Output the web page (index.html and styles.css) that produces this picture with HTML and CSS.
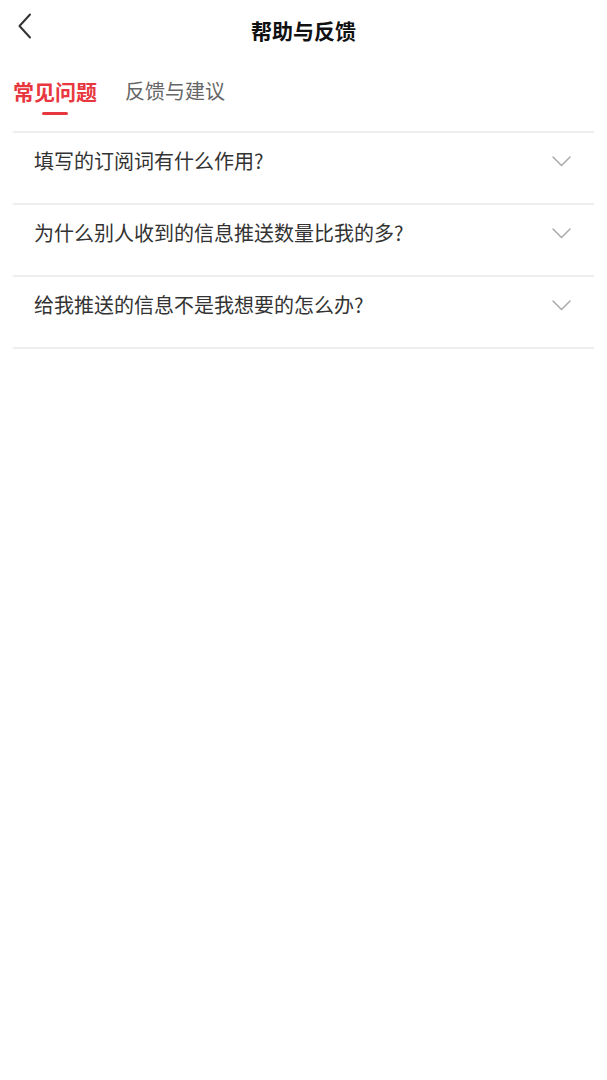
FILE: index.html
```html
<!DOCTYPE html>
<html lang="zh-CN">
<head>
<meta charset="utf-8">
<title>帮助与反馈</title>
<link rel="stylesheet" href="styles.css">
</head>
<body>
<div class="page">
  <header class="topbar">
    <div class="back">
      <svg width="16" height="26" viewBox="0 0 16 26"><path d="M13 1.5 L2.5 13 L13 24.5" fill="none" stroke="#333" stroke-width="2" stroke-linecap="round" stroke-linejoin="round"/></svg>
    </div>
    <h1 class="title">帮助与反馈</h1>
    <div class="spacer"></div>
  </header>
  <nav class="tabs">
    <div class="tab active"><span class="tab-text">常见问题</span><span class="bar"></span></div>
    <div class="tab"><span class="tab-text">反馈与建议</span><span class="bar"></span></div>
  </nav>
  <ul class="faq">
    <li class="item"><span class="q">填写的订阅词有什么作用?</span><svg class="chev" width="19" height="11" viewBox="0 0 19 11"><path d="M1 1 L9.5 9.5 L18 1" fill="none" stroke="#aaa" stroke-width="1.5" stroke-linecap="round" stroke-linejoin="round"/></svg></li>
    <li class="item"><span class="q">为什么别人收到的信息推送数量比我的多?</span><svg class="chev" width="19" height="11" viewBox="0 0 19 11"><path d="M1 1 L9.5 9.5 L18 1" fill="none" stroke="#aaa" stroke-width="1.5" stroke-linecap="round" stroke-linejoin="round"/></svg></li>
    <li class="item"><span class="q">给我推送的信息不是我想要的怎么办?</span><svg class="chev" width="19" height="11" viewBox="0 0 19 11"><path d="M1 1 L9.5 9.5 L18 1" fill="none" stroke="#aaa" stroke-width="1.5" stroke-linecap="round" stroke-linejoin="round"/></svg></li>
  </ul>
</div>
</body>
</html>
```
FILE: styles.css
```css
html, body {
  margin: 0;
  padding: 0;
  background: #fff;
}
body {
  font-family: "Noto Sans CJK SC", "Noto Sans", sans-serif;
  color: #333;
}
.page {
  width: 607px;
  min-height: 1080px;
}
.topbar {
  height: 62px;
  display: grid;
  grid-template-columns: 1fr auto 1fr;
  align-items: center;
}
.back {
  padding-left: 17px;
  display: flex;
  align-items: center;
  height: 62px;
  margin-top: -10px;
}
.back svg { display: block; }
.title {
  margin: -2px 0 0;
  font-size: 21px;
  font-weight: 700;
  color: #111;
  line-height: 28px;
}
.tabs {
  display: flex;
  gap: 28px;
  padding: 15px 13px 0;
}
.tab {
  display: flex;
  flex-direction: column;
  align-items: center;
}
.tab-text {
  font-size: 20px;
  line-height: 28px;
  color: #666;
}
.tab.active .tab-text {
  font-size: 21px;
  font-weight: 700;
  color: #e8383f;
}
.bar {
  width: 26px;
  height: 3px;
  margin-top: 7px;
  border-radius: 2px;
  background: transparent;
}
.tab.active .bar {
  background: #e8383f;
}
.faq {
  list-style: none;
  margin: 16px 13px 0;
  padding: 0;
  border-top: 2px solid #efefef;
}
.item {
  height: 70px;
  box-sizing: content-box;
  display: flex;
  align-items: flex-start;
  justify-content: space-between;
  padding: 0 23px 0 21px;
  border-bottom: 2px solid #efefef;
}
.q {
  font-size: 20px;
  line-height: 28px;
  margin-top: 14px;
  color: #333;
}
.chev {
  display: block;
  margin-top: 23px;
}
```
